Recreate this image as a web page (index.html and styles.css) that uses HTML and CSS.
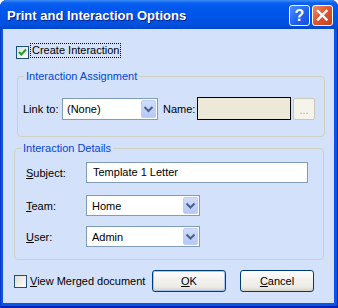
FILE: index.html
```html
<!DOCTYPE html>
<html lang="en">
<head>
    <meta charset="UTF-8">
    <title>Print and Interaction Options</title>
    <link rel="stylesheet" href="styles.css">
</head>
<body>
    <div class="window">
        <div class="titlebar">
            <span class="title">Print and Interaction Options</span>
            <div class="caption-btns">
                <span class="cap-btn help">?</span>
                <span class="cap-btn close">
                    <svg width="21" height="21" viewBox="0 0 21 21"><path d="M6 6 L14.5 14.5 M14.5 6 L6 14.5" stroke="#fff" stroke-width="2.4" stroke-linecap="square" fill="none"/></svg>
                </span>
            </div>
        </div>

        <div class="client">
            <div class="top-check">
                <span class="checkbox">
                    <svg width="11" height="11" viewBox="0 0 11 11"><path d="M2 5 L4.3 7.5 L9 2.5" stroke="#21a121" stroke-width="2" fill="none"/></svg>
                </span>
                <span class="focus">Create Interaction</span>
            </div>

            <fieldset class="group assign">
                <legend>Interaction Assignment</legend>
                <div class="row">
                    <span class="lbl link-lbl">Link to:</span>
                    <div class="combo link-combo">
                        <span class="val">(None)</span>
                        <span class="drop"><svg width="15" height="18" viewBox="0 0 15 18"><path d="M3.5 7 L7.5 11 L11.5 7" stroke="#4d6185" stroke-width="2" fill="none"/></svg></span>
                    </div>
                    <span class="lbl name-lbl">Name:</span>
                    <div class="textbox name-box"></div>
                    <span class="btn-ellipsis">...</span>
                </div>
            </fieldset>

            <fieldset class="group details">
                <legend>Interaction Details</legend>
                <div class="row subject-row">
                    <span class="lbl field-lbl"><u>S</u>ubject:</span>
                    <div class="textbox subject-box">Template 1 Letter</div>
                </div>
                <div class="row team-row">
                    <span class="lbl field-lbl"><u>T</u>eam:</span>
                    <div class="combo field-combo">
                        <span class="val">Home</span>
                        <span class="drop"><svg width="15" height="17" viewBox="0 0 15 17"><path d="M3.5 6.5 L7.5 10.5 L11.5 6.5" stroke="#4d6185" stroke-width="2" fill="none"/></svg></span>
                    </div>
                </div>
                <div class="row user-row">
                    <span class="lbl field-lbl"><u>U</u>ser:</span>
                    <div class="combo field-combo">
                        <span class="val">Admin</span>
                        <span class="drop"><svg width="15" height="17" viewBox="0 0 15 17"><path d="M3.5 6.5 L7.5 10.5 L11.5 6.5" stroke="#4d6185" stroke-width="2" fill="none"/></svg></span>
                    </div>
                </div>
            </fieldset>

            <div class="footer">
                <span class="checkbox"></span>
                <span class="check-text"><u>V</u>iew Merged document</span>
                <button class="btn default"><u>O</u>K</button>
                <button class="btn"><u>C</u>ancel</button>
            </div>
        </div>
    </div>
</body>
</html>
```

FILE: styles.css
```css
* {
    margin: 0;
    padding: 0;
    box-sizing: border-box;
}

body {
    background: #fff;
    font-family: "Liberation Sans", Arial, sans-serif;
    font-size: 11px;
    color: #000;
}

.window {
    width: 338px;
    height: 308px;
    display: flex;
    flex-direction: column;
    background: #0a55e4;
    border-radius: 7px 7px 0 0;
    overflow: hidden;
    box-shadow: inset 1px 0 #0838c8, inset -1px 0 #0020b0, inset 0 -2px #0020b0;
}

/* title bar */
.titlebar {
    height: 29px;
    display: flex;
    align-items: center;
    padding: 0 5px 0 7px;
    background: linear-gradient(to bottom, #3d8cf5 0, #0a60f0 3px, #0058ee 8px, #0054e6 18px, #0050de 25px, #0046cc 29px);
}

.title {
    flex: 1;
    color: #fff;
    font-weight: bold;
    font-size: 13px;
    text-shadow: 1px 1px #0c1e8c;
    padding-top: 1px;
}

.caption-btns {
    display: flex;
    gap: 2px;
    margin-top: 2px;
}

.cap-btn {
    width: 21px;
    height: 21px;
    border: 1px solid #fff;
    border-radius: 3px;
    display: flex;
    align-items: center;
    justify-content: center;
}

.help {
    background: linear-gradient(135deg, #4f8df8, #1c5ff0 60%, #1550d8);
    color: #fff;
    font-weight: bold;
    font-size: 16px;
}

.close {
    background: linear-gradient(135deg, #ee8a6a, #e0532f 50%, #c8401f);
}

.close svg {
    margin: -1px;
}

/* client area */
.client {
    flex: 1;
    margin: 0 4px 5px 3px;
    background: #d4e1fb;
}

.top-check {
    display: flex;
    align-items: center;
    height: 15px;
    margin: 14px 0 0 13px;
}

.checkbox {
    flex-shrink: 0;
    width: 13px;
    height: 13px;
    border: 1px solid #1c5180;
    background: linear-gradient(135deg, #dcdcd7, #fff);
    display: flex;
    align-items: center;
    justify-content: center;
}

.top-check .checkbox {
    margin-top: 3px;
}

.focus {
    border: 1px dotted #000;
    height: 15px;
    line-height: 13px;
    padding: 0 1px;
    margin-left: 1px;
}

/* group boxes */
.group {
    border: 1px solid #d0d0bf;
    border-radius: 4px;
}

.group legend {
    color: #0046d5;
    line-height: 13px;
    padding: 0 2px;
}

.assign {
    width: 308px;
    margin: 12px 0 0 14px;
    padding: 14px 0 16px 5px;
}

.assign legend {
    margin-left: 1px;
}

.details {
    width: 310px;
    margin: 5px 0 0 11px;
    padding: 7px 0 12px 11px;
}

.details legend {
    margin-left: -5px;
}

.row {
    display: flex;
    align-items: center;
}

.row > * {
    flex-shrink: 0;
}

.link-lbl {
    width: 39px;
}

.name-lbl {
    width: 34px;
    margin-left: 5px;
}

.field-lbl {
    width: 60px;
}

.combo {
    height: 22px;
    border: 1px solid #7f9db9;
    background: #fff;
    display: flex;
    align-items: center;
}

.combo .val {
    flex: 1;
    padding-left: 4px;
}

.drop {
    width: 15px;
    height: calc(100% - 2px);
    margin-right: 1px;
    border: 1px solid #bccdf8;
    border-radius: 2px;
    background: linear-gradient(to bottom, #cfdcfc, #b5c9f7);
    display: flex;
    align-items: center;
    justify-content: center;
}

.drop svg {
    margin: -1px;
}

.link-combo {
    width: 96px;
}

.field-combo {
    width: 114px;
    height: 21px;
}

.field-combo .val {
    padding-left: 5px;
}

.textbox {
    border: 1px solid #7f9db9;
    background: #fff;
}

.name-box {
    width: 94px;
    height: 23px;
    background: #ece9d8;
    border-color: #000;
}

.btn-ellipsis {
    width: 22px;
    height: 22px;
    margin-left: 2px;
    border: 1px solid #c9c7ba;
    border-radius: 2px;
    background: #f5f4ea;
    color: #aca899;
    text-align: center;
    line-height: 22px;
}

.subject-box {
    width: 222px;
    height: 21px;
    line-height: 19px;
    padding-left: 6px;
}

.team-row {
    margin-top: 12px;
}

.user-row {
    margin-top: 10px;
}

/* footer */
.footer {
    display: flex;
    align-items: center;
    height: 22px;
    margin-top: 10px;
    padding: 0 20px 0 11px;
}

.check-text {
    margin-left: 3px;
    white-space: nowrap;
}

.btn {
    flex-shrink: 0;
    width: 74px;
    height: 22px;
    border: 1px solid #003c74;
    border-radius: 3px;
    background: linear-gradient(to bottom, #fff 0, #f4f3ee 40%, #ecebe6 80%, #d6d0c5 100%);
    font-family: inherit;
    font-size: 11px;
    color: #000;
    margin-left: 14px;
}

.btn.default {
    margin-left: auto;
    box-shadow: inset 0 0 0 1px #aec4f0;
}
```
